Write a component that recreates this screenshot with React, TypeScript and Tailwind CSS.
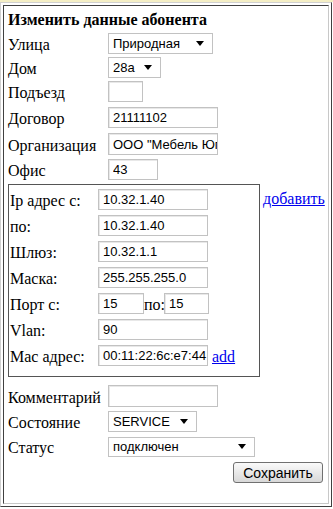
import React from 'react';

const serif = { fontFamily: '"Liberation Serif", "Times New Roman", serif' };
const sans = { fontFamily: '"Liberation Sans", Arial, sans-serif' };

const Field: React.FC<{ value?: string; w: string; h?: string }> = ({ value = '', w, h = 'h-[21px]' }) => (
  <input
    readOnly
    value={value}
    className={`${w} ${h} shrink-0 border border-[#c2c2c2] bg-white pl-[4px] pr-0 py-0 text-[13px] leading-none text-black outline-none shadow-[inset_1px_1px_0_#e8e8e8]`}
    style={sans}
  />
);

const Select: React.FC<{ value: string; w: string; h?: string }> = ({ value, w, h = 'h-[21px]' }) => (
  <div
    className={`${w} ${h} shrink-0 border border-[#c2c2c2] bg-white pl-[4px] pr-[8px] text-[13px] leading-none text-black flex items-center justify-between whitespace-nowrap`}
    style={sans}
  >
    <span>{value}</span>
    <svg width="8" height="5" viewBox="0 0 8 5" className="shrink-0">
      <path d="M0 0 H8 L4 5 Z" fill="#000" />
    </svg>
  </div>
);

const Row: React.FC<{ label: string; mt: string; children: React.ReactNode; labelW?: string }> = ({
  label,
  mt,
  children,
  labelW = 'w-[100px]',
}) => (
  <div className={`flex items-center ${mt}`}>
    <div className={`${labelW} shrink-0 text-[16px] leading-[18px] pt-[3px]`} style={serif}>
      {label}
    </div>
    {children}
  </div>
);

export default function App() {
  return (
    <div className="w-[333px] h-[509px] bg-white text-black overflow-hidden">
      <div className="h-[2px] bg-[#f4eec4]" />
      <div className="w-[332px] h-[505px] border border-t-[#d0d0d0] border-l-[#d0d0d0] border-r-[#404040] border-b-[#404040] p-[2px]">
        <div className="h-full border border-t-[#404040] border-l-[#404040] border-r-[#c8c8c8] border-b-[#c8c8c8] pl-[4px] pr-[5px] pt-[3px]">
          <div className="h-[22px] text-[16px] font-bold leading-[22px]" style={serif}>
            Изменить данные абонента
          </div>

          <Row label="Улица" mt="mt-[2px]">
            <Select value="Природная" w="w-[105px]" />
          </Row>
          <Row label="Дом" mt="mt-[3px]">
            <Select value="28а" w="w-[53px]" />
          </Row>
          <Row label="Подъезд" mt="mt-[3px]">
            <Field w="w-[35px]" />
          </Row>
          <Row label="Договор" mt="mt-[5px]">
            <Field value="21111102" w="w-[110px]" />
          </Row>
          <Row label="Организация" mt="mt-[5px]">
            <Field value={'ООО "Мебель Юг"'} w="w-[110px]" h="h-[22px]" />
          </Row>
          <Row label="Офис" mt="mt-[4px]">
            <Field value="43" w="w-[50px]" />
          </Row>

          {/* IP block */}
          <div className="flex items-start mt-[4px]">
            <div className="w-[252px] h-[193px] shrink-0 border border-[#555555] pl-[1px] pt-[4px]">
              <Row label="Ip адрес с:" mt="mt-0" labelW="w-[88px]">
                <Field value="10.32.1.40" w="w-[110px]" />
              </Row>
              <Row label="по:" mt="mt-[5px]" labelW="w-[88px]">
                <Field value="10.32.1.40" w="w-[110px]" />
              </Row>
              <Row label="Шлюз:" mt="mt-[5px]" labelW="w-[88px]">
                <Field value="10.32.1.1" w="w-[110px]" />
              </Row>
              <Row label="Маска:" mt="mt-[5px]" labelW="w-[88px]">
                <Field value="255.255.255.0" w="w-[110px]" />
              </Row>
              <Row label="Порт с:" mt="mt-[5px]" labelW="w-[88px]">
                <Field value="15" w="w-[46px]" />
                <span className="w-[20px] text-[16px] leading-[18px] pt-[3px]" style={serif}>
                  по:
                </span>
                <Field value="15" w="w-[45px]" />
              </Row>
              <Row label="Vlan:" mt="mt-[5px]" labelW="w-[88px]">
                <Field value="90" w="w-[110px]" />
              </Row>
              <Row label="Мас адрес:" mt="mt-[5px]" labelW="w-[88px]">
                <Field value="00:11:22:6c:e7:44" w="w-[110px]" />
                <a href="#" className="ml-[4px] text-[16px] leading-[18px] pt-[3px] text-[#0000ee] underline" style={serif}>
                  add
                </a>
              </Row>
            </div>
            <a href="#" className="ml-[3px] mt-[6px] text-[16px] leading-[18px] text-[#0000ee] underline" style={serif}>
              добавить
            </a>
          </div>

          <Row label="Комментарий" mt="mt-[8px]">
            <Field w="w-[110px]" h="h-[22px]" />
          </Row>
          <Row label="Состояние" mt="mt-[4px]">
            <Select value="SERVICE" w="w-[89px]" />
          </Row>
          <Row label="Статус" mt="mt-[4px]">
            <Select value="подключен" w="w-[147px]" h="h-[20px]" />
          </Row>
          <div className="flex justify-end mt-[5px]">
            <button
              className="w-[90px] h-[21px] rounded-[3px] border border-[#707070] bg-gradient-to-b from-[#fafafa] to-[#d8d8d8] text-[14px] leading-none text-black"
              style={sans}
            >
              Сохранить
            </button>
          </div>
        </div>
      </div>
    </div>
  );
}
